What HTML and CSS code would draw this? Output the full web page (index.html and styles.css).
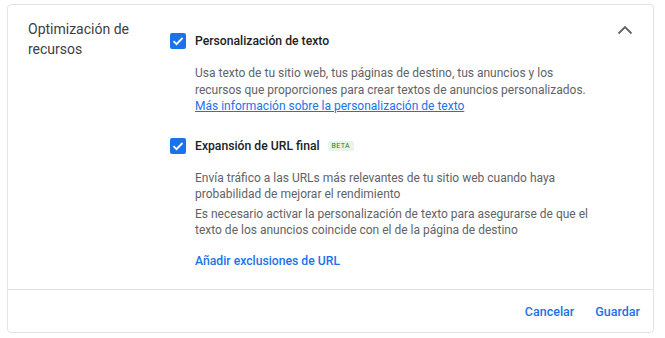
FILE: index.html
```html
<!DOCTYPE html>
<html lang="es">
<head>
    <meta charset="UTF-8">
    <title>Optimización de recursos</title>
    <link rel="stylesheet" href="styles.css">
</head>
<body>
    <div class="card">
        <div class="card-body">
            <div class="section-title">Optimización de recursos</div>
            <div class="options">
                <div class="option">
                    <label class="option-head">
                        <span class="checkbox">
                            <svg viewBox="0 0 16 16" width="16" height="16"><path d="M3.5 8.2l3 3 6-6.2" fill="none" stroke="#fff" stroke-width="1.8"/></svg>
                        </span>
                        <span class="option-label">Personalización de texto</span>
                    </label>
                    <p class="option-desc">
                        Usa texto de tu sitio web, tus páginas de destino, tus anuncios y los recursos que proporciones para crear textos de anuncios personalizados.
                        <a href="#" class="learn-link">Más información sobre la personalización de texto</a>
                    </p>
                </div>
                <div class="option">
                    <label class="option-head">
                        <span class="checkbox">
                            <svg viewBox="0 0 16 16" width="16" height="16"><path d="M3.5 8.2l3 3 6-6.2" fill="none" stroke="#fff" stroke-width="1.8"/></svg>
                        </span>
                        <span class="option-label">Expansión de URL final</span>
                        <span class="badge">BETA</span>
                    </label>
                    <p class="option-desc">Envía tráfico a las URLs más relevantes de tu sitio web cuando haya probabilidad de mejorar el rendimiento</p>
                    <p class="option-desc note">Es necesario activar la personalización de texto para asegurarse de que el texto de los anuncios coincide con el de la página de destino</p>
                    <a href="#" class="action-link">Añadir exclusiones de URL</a>
                </div>
            </div>
            <button class="collapse" aria-label="Contraer">
                <svg viewBox="0 0 16 10" width="16" height="10"><path d="M1.5 8.5L8 2l6.5 6.5" fill="none" stroke="#5f6368" stroke-width="1.8"/></svg>
            </button>
        </div>
        <div class="card-footer">
            <button class="text-btn">Cancelar</button>
            <button class="text-btn">Guardar</button>
        </div>
    </div>
</body>
</html>
```

FILE: styles.css
```css
body {
    margin: 0;
    padding: 4px 0 0 7px;
    font-family: Roboto, "Noto Sans", Arial, sans-serif;
    background-color: #fff;
    color: #3c4043;
}
.card {
    width: 645px;
    height: 327px;
    border: 1px solid #e3e3e3;
    border-radius: 4px;
    display: flex;
    flex-direction: column;
}
.card-body {
    flex: 1;
    min-height: 0;
    display: flex;
    padding: 14px 20px 0 20px;
}
.section-title {
    width: 142px;
    font-size: 14px;
    line-height: 20px;
    color: #3c4043;
}
.options {
    width: 430px;
    padding-top: 14px;
}
.option {
    margin-bottom: 23px;
}
.option-head {
    display: flex;
    align-items: center;
    height: 16px;
}
.checkbox {
    width: 16px;
    height: 16px;
    border-radius: 2px;
    background-color: #1a73e8;
    display: flex;
    margin-right: 9px;
}
.option-label {
    font-size: 12.2px;
    font-weight: 500;
    color: #202124;
}
.badge {
    margin-left: 8px;
    padding: 1px 4px;
    font-size: 7px;
    letter-spacing: 0.4px;
    color: #188038;
    background-color: #e6f4ea;
    border-radius: 2px;
}
.option-desc {
    margin: 16px 0 0 25px;
    max-width: 402px;
    font-size: 12px;
    line-height: 16.5px;
    color: #5f6368;
}
.option-desc.note {
    margin-top: 3px;
}
.learn-link {
    display: block;
    color: #1a73e8;
}
.action-link {
    display: block;
    margin: 15px 0 0 25px;
    font-size: 12.2px;
    font-weight: 500;
    color: #1a73e8;
    text-decoration: none;
}
.collapse {
    margin-left: auto;
    margin-top: -1px;
    margin-right: -4px;
    width: 24px;
    height: 24px;
    padding: 0;
    border: none;
    background: none;
    align-self: flex-start;
}
.card-footer {
    flex-shrink: 0;
    height: 42px;
    border-top: 1px solid #e3e3e3;
    display: flex;
    justify-content: flex-end;
    align-items: center;
    gap: 21px;
    padding: 0 13px;
}
.text-btn {
    border: none;
    background: none;
    padding: 0;
    font-family: inherit;
    font-size: 12.5px;
    font-weight: 500;
    color: #1a73e8;
    cursor: pointer;
}
```
